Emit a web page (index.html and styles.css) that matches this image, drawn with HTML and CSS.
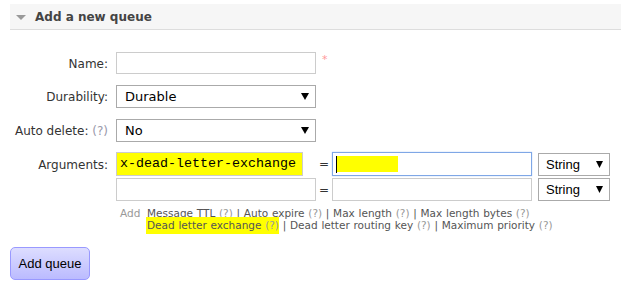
FILE: index.html
```html
<!DOCTYPE html>
<html>
<head>
<meta charset="utf-8">
<link rel="stylesheet" href="styles.css">
</head>
<body>
<div class="section">
  <h2 class="section-h"><span class="tri"></span>Add a new queue</h2>
  <form class="form">
    <div class="row">
      <label class="lbl">Name:</label>
      <div class="ctl"><input class="inp" type="text"><span class="req">*</span></div>
    </div>
    <div class="row">
      <label class="lbl">Durability:</label>
      <div class="ctl"><select class="sel"><option>Durable</option></select></div>
    </div>
    <div class="row">
      <label class="lbl">Auto delete: <span class="help">(?)</span></label>
      <div class="ctl"><select class="sel"><option>No</option></select></div>
    </div>
    <div class="row args">
      <label class="lbl">Arguments:</label>
      <div class="argbox">
        <div class="argrow">
          <div class="key hl-key">x-dead-letter-exchange</div>
          <span class="eq">=</span>
          <div class="val focus"><span class="caret"></span><span class="hl-val"></span></div>
          <select class="type"><option>String</option></select>
        </div>
        <div class="argrow second">
          <div class="key"></div>
          <span class="eq">=</span>
          <div class="val"></div>
          <select class="type"><option>String</option></select>
        </div>
        <div class="hints">
          <span class="add">Add</span>
          <div class="links">
            <div>Message TTL <span class="q">(?)</span> | Auto expire <span class="q">(?)</span> | Max length <span class="q">(?)</span> | Max length bytes <span class="q">(?)</span></div>
            <div><span class="hl-link">Dead letter exchange <span class="q">(?)</span></span> | Dead letter routing key <span class="q">(?)</span> | Maximum priority <span class="q">(?)</span></div>
          </div>
        </div>
      </div>
    </div>
    <button class="btn" type="button">Add queue</button>
  </form>
</div>
</body>
</html>
```
FILE: styles.css
```css
html, body { margin: 0; padding: 0; background: #fff; }
body { font-family: "DejaVu Sans", Verdana, sans-serif; color: #333; }

.section { margin: 4px 0 0 10px; }
.section-h {
  margin: 0;
  height: 25px;
  background: #f6f6f6;
  border-bottom: 1px solid #ddd;
  display: flex;
  align-items: center;
  font-size: 12px;
  font-weight: bold;
  color: #444;
  padding-left: 6px;
}
.tri {
  width: 0; height: 0;
  border-left: 5px solid transparent;
  border-right: 5px solid transparent;
  border-top: 5px solid #999;
  margin-right: 9px;
  margin-top: 1px;
}

.form { padding-top: 22px; }
.row {
  display: grid;
  grid-template-columns: 98px 1fr;
  column-gap: 8px;
  align-items: center;
  margin-bottom: 11px;
}
.lbl { text-align: right; font-size: 12px; color: #333; white-space: nowrap; padding-top: 1px; }
.help { color: #99a; }
.ctl { display: flex; align-items: flex-start; }
.inp {
  box-sizing: border-box;
  width: 200px; height: 22px;
  border: 1px solid #ccc;
  margin: 0; padding: 0;
  outline: none;
}
.req { color: #f99; font-size: 11px; margin-left: 6px; margin-top: 1px; }
.sel {
  appearance: none; -webkit-appearance: none;
  box-sizing: border-box;
  width: 200px; height: 23px;
  border: 1px solid #aaa;
  border-radius: 0;
  background: #fff url("data:image/svg+xml;utf8,<svg xmlns='http://www.w3.org/2000/svg' width='8' height='7'><path d='M0 0H8L4 7Z' fill='black'/></svg>") no-repeat right 6px center;
  font-family: "DejaVu Sans", Verdana, sans-serif;
  font-size: 13px;
  color: #000;
  padding: 0 0 0 8px;
  margin: 0;
}
.row:nth-child(3) { margin-bottom: 10px; }

.args { align-items: start; }
.args .lbl { margin-top: 5px; }
.argbox { display: flex; flex-direction: column; }
.argrow { display: flex; align-items: center; }
.argrow.second { margin-top: 2px; }
.key, .val {
  box-sizing: border-box;
  width: 200px; height: 23px;
  border: 1px solid #ccc;
  background: #fff;
}
.argrow:first-child .key, .argrow:first-child .val { height: 24px; }
.hl-key {
  background: #ffff00;
  border-color: #ccc;
  font-family: "Liberation Mono", "Courier New", monospace;
  font-size: 13.33px;
  color: #000;
  padding-left: 3px;
  line-height: 22px;
  width: 187px;
  margin-right: 13px;
  box-shadow: 13px 0 0 -1px #fff;
}
.eq { width: 16px; text-align: center; font-size: 12px; color: #333; }
.val.focus {
  border: 1px solid #7fa7e6;
  box-shadow: 0 0 1px #9bbcf0;
  display: flex; align-items: center;
  padding-left: 3px;
}
.caret { width: 1px; height: 17px; background: #000; }
.hl-val { width: 61px; height: 16px; background: #ffff00; }
.type {
  appearance: none; -webkit-appearance: none;
  box-sizing: border-box;
  width: 72px; height: 23px;
  margin: 0 0 0 6px;
  border: 1px solid #aaa;
  border-radius: 0;
  background: #fff url("data:image/svg+xml;utf8,<svg xmlns='http://www.w3.org/2000/svg' width='7' height='7'><path d='M0 0H7L3.5 7Z' fill='black'/></svg>") no-repeat right 6px center;
  font-family: "Liberation Sans", Arial, sans-serif;
  font-size: 13px;
  color: #000;
  padding: 0 0 0 7px;
}

.hints { display: flex; margin-top: 6px; font-size: 10.5px; line-height: 12px; color: #555; word-spacing: 0.4px; }
.add { color: #999; margin-left: 4px; width: 27px; }
.q { color: #999; }
.hl-link { background: #ffff00; padding: 2px 0 3px 1px; margin-left: -1px; }

.btn {
  display: block;
  margin-top: 16px;
  width: 80px; height: 33px;
  border: 1px solid #99f;
  border-radius: 5px;
  background: linear-gradient(#ddf, #bbf);
  font-family: "Liberation Sans", Arial, sans-serif;
  font-size: 13px;
  color: #000;
  padding: 0;
}
```
